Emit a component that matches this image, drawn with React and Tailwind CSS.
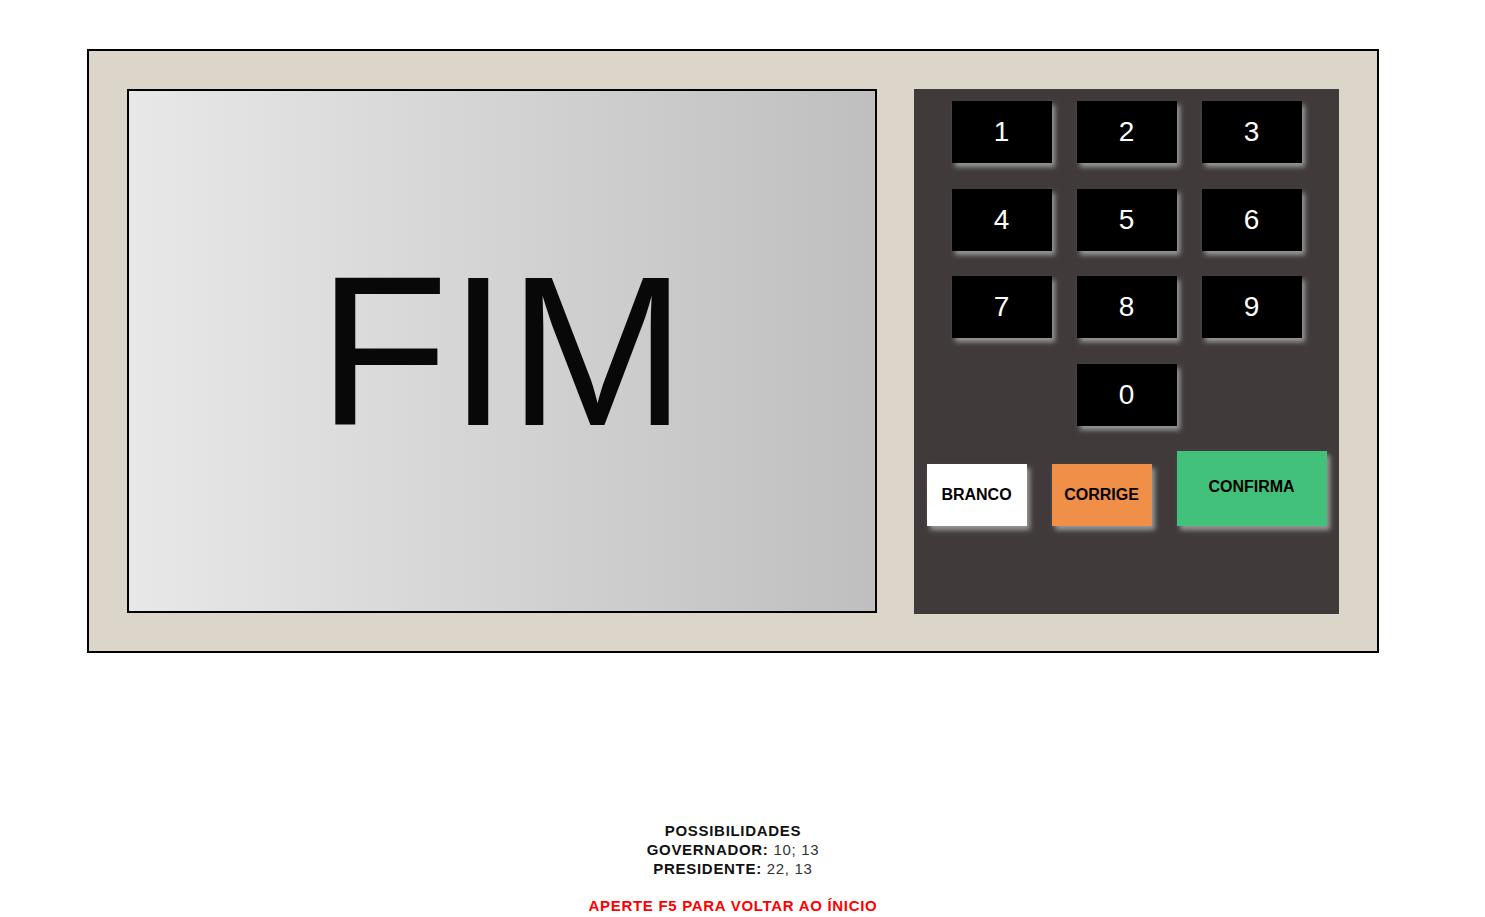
export default function App() {
  const digits = ["1", "2", "3", "4", "5", "6", "7", "8", "9"];
  const tecla =
    "w-[100px] h-[62px] bg-black text-white text-[28px] flex items-center justify-center shadow-[3px_4px_5px_#9a9a9a]";

  return (
    <div
      className="min-h-screen bg-white pt-[49px] pl-[87px]"
      style={{ fontFamily: '"Liberation Sans", Arial, sans-serif' }}
    >
      <div className="w-[1292px]">
        <div className="h-[604px] border-2 border-black bg-[#dcd5ca] p-[38px] flex gap-[37px]">
          <div className="w-[750px] h-[524px] shrink-0 border-2 border-black bg-gradient-to-r from-[#e8e8e8] to-[#bfbfbf] flex items-center justify-center">
            <span className="text-[214px] leading-none text-[#080808]">FIM</span>
          </div>

          <div className="w-[425px] h-[525px] shrink-0 bg-[#403a3a] pt-[12px] flex flex-col items-center">
            <div className="grid grid-cols-3 gap-x-[25px] gap-y-[25.6px]">
              {digits.map((d) => (
                <div key={d} className={tecla}>
                  {d}
                </div>
              ))}
              <div className={tecla + " col-start-2"}>0</div>
            </div>

            <div className="mt-[25px] flex items-end gap-[25px] text-base font-bold text-black">
              <div className="w-[100px] h-[62px] bg-white flex items-center justify-center shadow-[3px_4px_5px_#9a9a9a]">
                BRANCO
              </div>
              <div className="w-[100px] h-[62px] bg-[#ef8f48] flex items-center justify-center shadow-[3px_4px_5px_#9a9a9a]">
                CORRIGE
              </div>
              <div className="w-[150px] h-[75px] bg-[#42c17b] flex items-center justify-center pb-[3px] shadow-[3px_4px_5px_#9a9a9a]">
                CONFIRMA
              </div>
            </div>
          </div>
        </div>

        <div className="mt-[168px] text-center text-[15px] leading-[19px] tracking-[0.7px]">
          <p className="font-bold text-[#111]">POSSIBILIDADES</p>
          <p className="text-[#333]">
            <span className="font-bold text-[#111]">GOVERNADOR:</span> 10; 13
          </p>
          <p className="text-[#333]">
            <span className="font-bold text-[#111]">PRESIDENTE:</span> 22, 13
          </p>
          <p className="mt-[18px] font-bold text-[#ff0000]">APERTE F5 PARA VOLTAR AO ÍNICIO</p>
        </div>
      </div>
    </div>
  );
}
